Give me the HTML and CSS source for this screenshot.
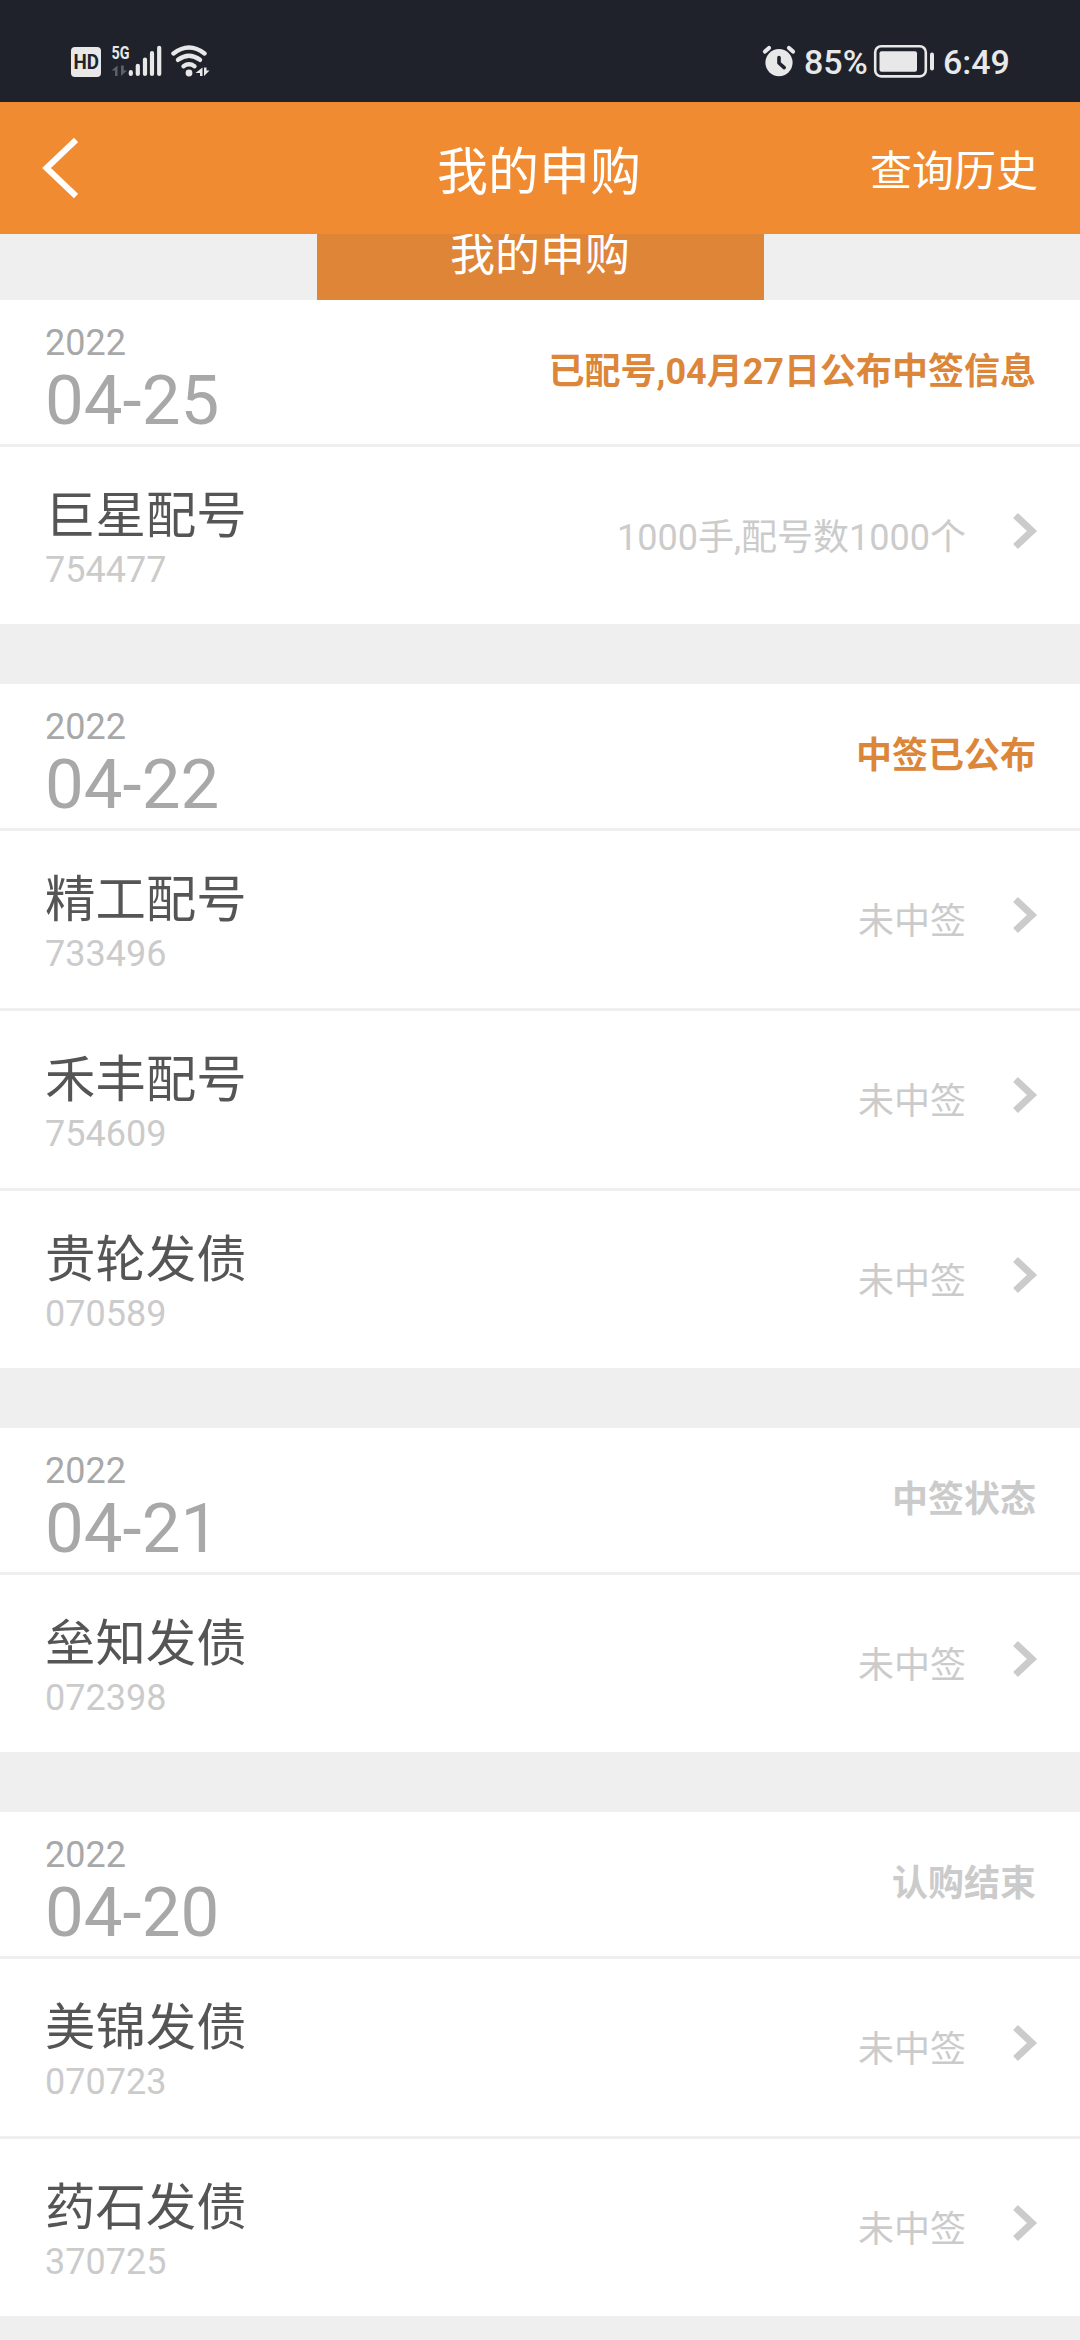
FILE: index.html
```html
<!DOCTYPE html>
<html lang="zh-CN">
<head>
    <meta charset="UTF-8">
    <title>我的申购</title>
    <link rel="stylesheet" href="styles.css">
</head>
<body>

<svg class="defs">
    <symbol id="arrow" viewBox="0 0 26 38">
        <path d="M3.5 3.5 L20 19 L3.5 34.5" fill="none" stroke="#cbcbcb" stroke-width="7"/>
    </symbol>
</svg>

<div class="statusbar">
    <div class="status-left">
        <svg width="146" height="40" viewBox="70 42 146 40" fill="#e8e8e8">
            <rect x="71" y="47" width="30" height="30" rx="4"/>
            <text class="hd" x="73.5" y="69" textLength="25.5" lengthAdjust="spacingAndGlyphs">HD</text>
            <text class="net" x="111.5" y="59.3" textLength="18" lengthAdjust="spacingAndGlyphs">5G</text>
            <path d="M117.5 65.5 V76 H115 V70.5 H111.5 Z M121 65.5 V76 L127 70.5 H123.8 V65.5 Z" fill="#5d6067"/>
            <g stroke="#e8e8e8" stroke-width="4.2" stroke-linecap="round">
                <path d="M130.8 72.2 V74 M137.8 65.8 V74 M145 59.5 V74 M152 53 V74 M159.2 47.8 V74"/>
            </g>
            <g fill="none" stroke="#e8e8e8" stroke-width="4.4" stroke-linecap="round">
                <path d="M173.5 53.5 Q189 41.5 204.5 53.5"/>
                <path d="M178 59.8 Q189 51.5 200 59.8"/>
                <path d="M183.5 66.2 Q189 62.4 194.5 66.2"/>
            </g>
            <circle cx="189" cy="73" r="3.4"/>
            <path d="M202.5 67.5 V76 H200 V73 H195.5 Z M204 67.5 H206.5 V70.5 H209.5 L204 76 Z"/>
        </svg>
    </div>
    <div class="status-right">
        <svg width="34" height="34" viewBox="762 44 34 34">
            <circle cx="779" cy="62.6" r="13.6" fill="#e8e8e8"/>
            <path d="M765 51.5 L769 48 M789 48 L793 51.5" stroke="#e8e8e8" stroke-width="4.2" stroke-linecap="round"/>
            <path d="M779 57.5 V63 L784.2 67.6" fill="none" stroke="#1f222b" stroke-width="3.6" stroke-linecap="round" stroke-linejoin="round"/>
        </svg>
        <span class="percent">85%</span>
        <svg width="62" height="34" viewBox="873 44 62 34">
            <rect x="875.2" y="46.2" width="50.6" height="30.2" rx="6" fill="none" stroke="#e8e8e8" stroke-width="2.6"/>
            <rect x="879.5" y="51.3" width="37.5" height="20.4" rx="2" fill="#e8e8e8"/>
            <rect x="930" y="52.5" width="4" height="18" rx="2" fill="#e8e8e8"/>
        </svg>
        <span class="clock">6:49</span>
    </div>
</div>

<div class="navbar">
    <svg class="back" width="38" height="62" viewBox="0 0 38 62">
        <path d="M36 3 L6.5 31 L36 59" fill="none" stroke="#fff" stroke-width="6"/>
    </svg>
    <h1>我的申购</h1>
    <span class="history">查询历史</span>
</div>

<div class="tabs">
    <div class="tab">我的申购</div>
</div>

<div class="group">
    <div class="day">
        <div>
            <div class="year">2022</div>
            <div class="date">04-25</div>
        </div>
        <div class="state active">已配号,04月27日公布中签信息</div>
    </div>
    <div class="row">
        <div>
            <div class="name">巨星配号</div>
            <div class="code">754477</div>
        </div>
        <div class="result">1000手,配号数1000个</div>
        <svg class="arrow"><use href="#arrow"/></svg>
    </div>
</div>

<div class="group">
    <div class="day">
        <div>
            <div class="year">2022</div>
            <div class="date">04-22</div>
        </div>
        <div class="state active">中签已公布</div>
    </div>
    <div class="row">
        <div>
            <div class="name">精工配号</div>
            <div class="code">733496</div>
        </div>
        <div class="result">未中签</div>
        <svg class="arrow"><use href="#arrow"/></svg>
    </div>
    <div class="row">
        <div>
            <div class="name">禾丰配号</div>
            <div class="code">754609</div>
        </div>
        <div class="result">未中签</div>
        <svg class="arrow"><use href="#arrow"/></svg>
    </div>
    <div class="row">
        <div>
            <div class="name">贵轮发债</div>
            <div class="code">070589</div>
        </div>
        <div class="result">未中签</div>
        <svg class="arrow"><use href="#arrow"/></svg>
    </div>
</div>

<div class="group">
    <div class="day">
        <div>
            <div class="year">2022</div>
            <div class="date">04-21</div>
        </div>
        <div class="state">中签状态</div>
    </div>
    <div class="row">
        <div>
            <div class="name">垒知发债</div>
            <div class="code">072398</div>
        </div>
        <div class="result">未中签</div>
        <svg class="arrow"><use href="#arrow"/></svg>
    </div>
</div>

<div class="group">
    <div class="day">
        <div>
            <div class="year">2022</div>
            <div class="date">04-20</div>
        </div>
        <div class="state">认购结束</div>
    </div>
    <div class="row">
        <div>
            <div class="name">美锦发债</div>
            <div class="code">070723</div>
        </div>
        <div class="result">未中签</div>
        <svg class="arrow"><use href="#arrow"/></svg>
    </div>
    <div class="row">
        <div>
            <div class="name">药石发债</div>
            <div class="code">370725</div>
        </div>
        <div class="result">未中签</div>
        <svg class="arrow"><use href="#arrow"/></svg>
    </div>
</div>

</body>
</html>
```

FILE: styles.css
```css
* { box-sizing: border-box; }
body { margin: 0; height: 2340px; overflow: hidden; background-color: #efefef; font-family: Roboto, "Noto Sans CJK SC", sans-serif; }
svg { display: block; flex: none; }
.defs { display: none; }

.statusbar { display: flex; justify-content: space-between; height: 102px; padding: 42px 70px 0; background-color: #1f222b; color: #e8e8e8; }
.status-right { display: flex; padding-top: 2px; font-size: 34px; font-weight: 500; line-height: 36px; }
.percent { width: 69px; margin-left: 8px; }
.clock { width: 67px; margin-left: 8px; }
.hd { font: bold 20px Roboto, sans-serif; fill: #1f222b; }
.net { font: bold 19px Roboto, sans-serif; }

.navbar { display: grid; grid-template-columns: 1fr auto 1fr; align-items: center; height: 132px; padding: 0 42px 0 40px; background-color: #f08b32; color: #fff; }
.navbar h1 { margin: 9px 0 0; font-size: 51px; font-weight: 400; line-height: 60px; }
.history { justify-self: end; margin-top: 8px; font-size: 42px; line-height: 50px; }

/* the tab strip is scrolled half way under the navbar */
.tabs { display: flex; justify-content: center; height: 66px; overflow: hidden; }
.tab { width: 447px; background-color: #df8537; color: #fff; font-size: 45px; line-height: 60px; text-align: center; margin-top: -8px; }

.group { margin-bottom: 60px; background-color: #fff; }
.day { display: flex; justify-content: space-between; height: 144px; padding: 22px 44px 0 45px; }
.year { color: #a8a8a8; font-size: 36px; line-height: 42px; }
.date { color: #a8a8a8; font-size: 69px; line-height: 74px; }
.state { margin-top: 29px; color: #cbcbcb; font-size: 36px; font-weight: bold; line-height: 42px; }
.active { color: #dc863a; }

.row { display: flex; height: 180px; padding: 38px 42px 0 45px; border-top: 3px solid #efefef; }
.name { color: #555; font-size: 50.4px; line-height: 62px; }
.code { margin-top: 2px; color: #cbcbcb; font-size: 36px; line-height: 42px; }
.result { margin: 32px 46px 0 auto; color: #cbcbcb; font-size: 36px; line-height: 42px; }
.arrow { width: 26px; height: 38px; margin-top: 27px; }
```
